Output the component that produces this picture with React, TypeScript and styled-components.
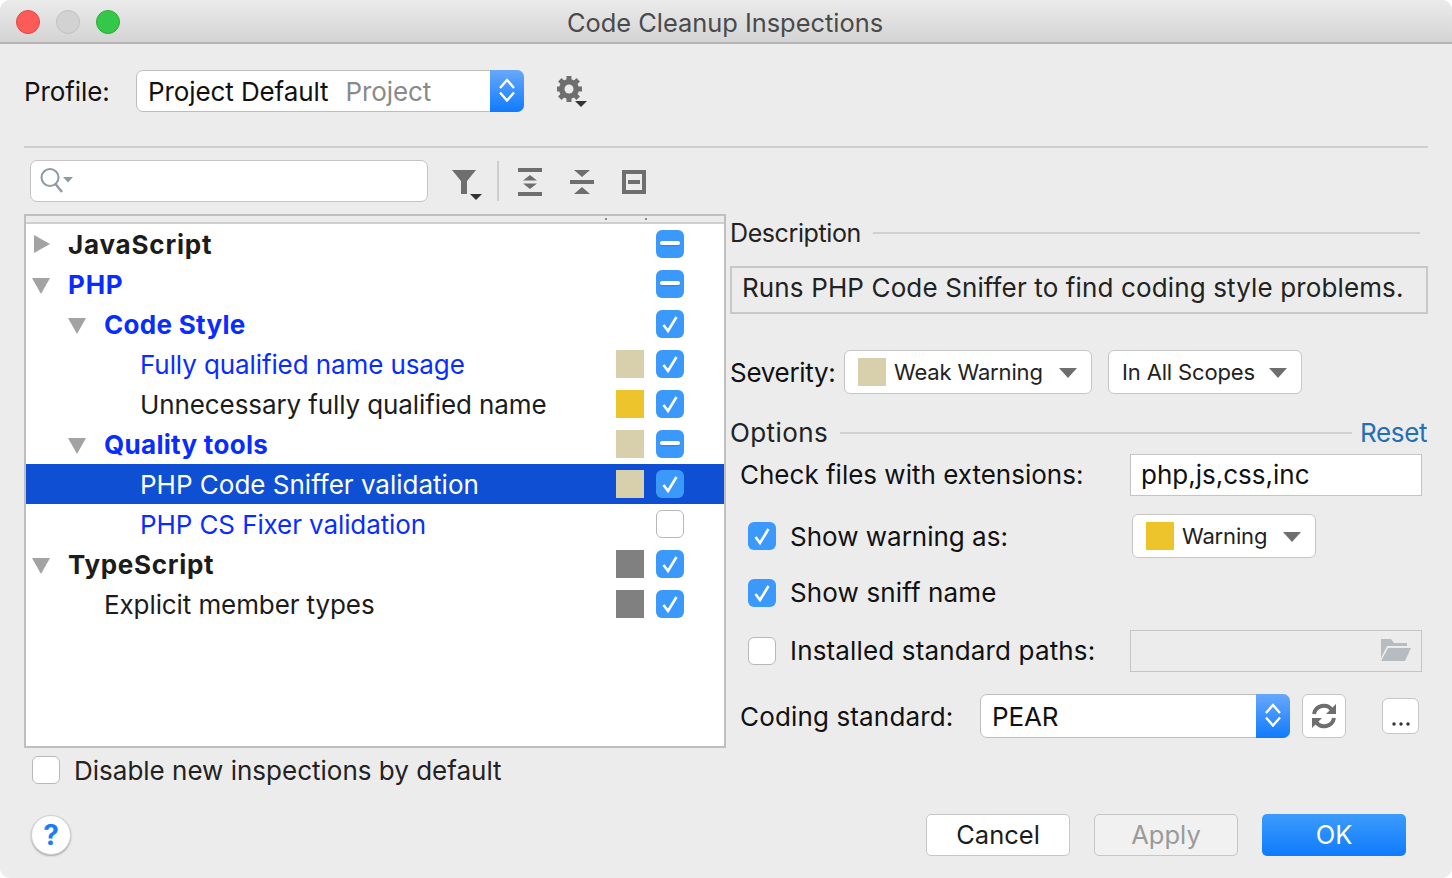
import React from 'react';
import styled, { createGlobalStyle } from 'styled-components';

const Global = createGlobalStyle`
  html, body { margin: 0; padding: 0; background: #fff; }
  body { font-family: Inter, "Liberation Sans", sans-serif; color: #1c1c1c; }
  * { box-sizing: border-box; }
`;

const Win = styled.div`
  width: 1452px; height: 878px; background: #ececec; border-radius: 10px; overflow: hidden;
  display: flex; flex-direction: column; font-size: 26px; line-height: 32px;
`;
const TitleBar = styled.div`
  height: 44px; flex: none; position: relative; display: flex; align-items: center; justify-content: center;
  background: linear-gradient(#ebebeb, #d4d4d4); border-bottom: 2px solid #b4b4b4;
  color: #4a4a4a; font-size: 25.4px; padding: 4px 2px 0 0;
`;
const Lights = styled.div`
  position: absolute; left: 16px; top: 10px; display: flex; gap: 16px;
`;
const Light = styled.span<{ $c: string; $b: string }>`
  width: 24px; height: 24px; border-radius: 50%; background: ${p => p.$c}; border: 1px solid ${p => p.$b};
`;
const Content = styled.div`
  flex: 1; display: flex; flex-direction: column; padding: 26px 24px 0;
`;
const ProfileRow = styled.div`
  display: flex; align-items: center; height: 42px;
`;
const ProfileLabel = styled.span`
  width: 112px; color: #111; font-size: 26px; padding-top: 2px; letter-spacing: -0.1px;
`;
const SelectBox = styled.div<{ $w: number; $h: number; $ml?: number }>`
  width: ${p => p.$w}px; height: ${p => p.$h}px; margin-left: ${p => p.$ml ?? 0}px; background: #fff; border: 1px solid #bdbdbd; border-radius: 7px;
  display: flex; align-items: center; padding: 2px 0 0 11px; position: relative; flex: none; color: #111; letter-spacing: -0.1px;
`;
const Stepper = styled.div<{ $w: number }>`
  position: absolute; right: -1px; top: -1px; bottom: -1px; width: ${p => p.$w}px; border-radius: 0 7px 7px 0;
  background: linear-gradient(#68a8fb, #0f7bfd); display: flex; align-items: center; justify-content: center; padding-bottom: 3px;
`;
const Muted = styled.span`
  color: #8a8a8a; margin-left: 17px;
`;
const GearWrap = styled.div`
  margin-left: 33px; width: 32px; height: 32px; flex: none; align-self: flex-end; margin-bottom: 4px;
`;
const Rule = styled.div`
  height: 2px; background: #cfcfcf; margin-top: 34px;
`;
const ToolRow = styled.div`
  display: flex; align-items: center; height: 42px; margin-top: 12px; padding-left: 6px;
`;
const Search = styled.div`
  width: 398px; height: 42px; background: #fff; border: 1px solid #c4c4c4; border-radius: 7px;
  display: flex; align-items: center; padding-left: 9px;
`;
const ToolIcon = styled.svg<{ $ml: number; $mt?: number }>`
  margin-left: ${p => p.$ml}px; margin-top: ${p => p.$mt ?? 2}px; flex: none; display: block;
`;
const ToolSep = styled.div`
  width: 2px; height: 40px; background: #cdcdcd; margin-left: 15px;
`;
const Main = styled.div`
  display: flex; margin-top: 12px;
`;
const LeftCol = styled.div`
  width: 702px; flex: none;
`;
const Tree = styled.div`
  height: 534px; background: #fff; border: 2px solid #bfbfbf; display: flex; flex-direction: column;
`;
const TreeHead = styled.div`
  height: 8px; flex: none; background: #ececec; border-bottom: 2px solid #cfcfcf; position: relative;
  &::before, &::after { content: ""; position: absolute; top: 2px; width: 2px; height: 2px; background: #8a8a8a; }
  &::before { left: 579px; }
  &::after { left: 619px; }
`;
const Row = styled.div<{ $level: number; $sel?: boolean }>`
  height: 40px; flex: none; display: flex; align-items: center;
  padding-left: ${p => 8 + p.$level * 36}px; padding-right: 40px;
  background: ${p => (p.$sel ? '#0e4fd4' : 'transparent')};
`;
const ArrowSlot = styled.span`
  width: 34px; flex: none; display: flex; align-items: center;
`;
const DownIcon = styled.svg`
  margin: 4px 0 0 -2px;
`;
const RowLabel = styled.span<{ $tone: 'dark' | 'blue' | 'white'; $ls: number; $bold?: boolean }>`
  color: ${p => (p.$tone === 'blue' ? '#0a2dff' : p.$tone === 'white' ? '#fff' : '#1c1c1c')};
  font-weight: ${p => (p.$bold ? 700 : 400)};
  letter-spacing: ${p => p.$ls}px;
  flex: 1; white-space: nowrap; padding-top: 2px;
`;
const Swatch = styled.span<{ $c: string }>`
  width: 28px; height: 28px; flex: none; background: ${p => p.$c}; margin-right: 12px;
`;
const SwatchGap = styled.span`
  width: 40px; flex: none;
`;
const BoxEmpty = styled.span`
  width: 28px; height: 28px; flex: none; background: #fff; border: 1px solid #b8b8b8; border-radius: 6px; display: block;
`;
const BoxOn = styled.span`
  width: 28px; height: 28px; flex: none; background: #3c99fc; border-radius: 6px; display: flex; align-items: center; justify-content: center;
`;
const DisableRow = styled.div`
  display: flex; align-items: center; gap: 14px; margin-top: 8px; padding-left: 8px; height: 28px; color: #222;
`;
const DisableText = styled.span`
  padding-top: 2px;
`;
const RightCol = styled.div`
  flex: 1; margin-left: 4px; display: flex; flex-direction: column; min-width: 0;
`;
const Section = styled.div<{ $mt: number }>`
  display: flex; align-items: center; margin-top: ${p => p.$mt}px; height: 30px; color: #222;
`;
const SectionTitle = styled.span<{ $fs: number; $ls: number; $pt: number }>`
  font-size: ${p => p.$fs}px; letter-spacing: ${p => p.$ls}px; padding-top: ${p => p.$pt}px;
`;
const SectionLine = styled.div`
  flex: 1; height: 2px; background: #d0d0d0; margin: 0 8px 0 12px;
`;
const Reset = styled.span`
  color: #2470b3; margin-right: 1px; letter-spacing: -0.4px;
`;
const DescBox = styled.div`
  height: 48px; margin-top: 18px; border: 2px solid #c8c8c8; display: flex; align-items: center; padding: 0 0 5px 10px; white-space: nowrap; color: #222; letter-spacing: 0.13px;
`;
const Line = styled.div<{ $mt: number; $pl?: number; $h: number }>`
  display: flex; align-items: center; margin-top: ${p => p.$mt}px; padding-left: ${p => p.$pl ?? 0}px; height: ${p => p.$h}px; color: #111; white-space: nowrap;
`;
const Label = styled.span<{ $w: number; $ls?: number; $pt?: number }>`
  width: ${p => p.$w}px; flex: none; padding-top: ${p => p.$pt ?? 2}px; letter-spacing: ${p => p.$ls ?? 0}px;
`;
const Drop = styled.div<{ $w: number; $ml: number }>`
  width: ${p => p.$w}px; margin-left: ${p => p.$ml}px; height: 44px; background: #fff; border: 1px solid #c6c6c6; border-radius: 6px;
  display: flex; align-items: center; padding-left: 13px; font-size: 22px; color: #222; flex: none; position: relative;
`;
const DropSwatch = styled.span<{ $c: string }>`
  width: 28px; height: 28px; background: ${p => p.$c}; margin-right: 8px; flex: none;
`;
const DropText = styled.span`
  letter-spacing: -0.15px;
`;
const Caret = styled.svg`
  position: absolute; right: 14px; top: 50%; margin-top: -4px;
`;
const TextField = styled.div<{ $disabled?: boolean }>`
  width: 292px; height: 42px; flex: none;
  background: ${p => (p.$disabled ? 'transparent' : '#fff')}; border: 1px solid #c4c4c4;
  display: flex; align-items: center; justify-content: ${p => (p.$disabled ? 'flex-end' : 'flex-start')}; padding: 0 10px; color: #111;
`;
const CheckSpacer = styled.span`
  width: 14px; flex: none;
`;
const IconBtn = styled.div<{ $ml: number; $w: number; $h: number }>`
  margin-left: ${p => p.$ml}px; width: ${p => p.$w}px; height: ${p => p.$h}px; flex: none; background: #fff; border: 1px solid #c6c6c6; border-radius: 6px;
  display: flex; align-items: center; justify-content: center;
`;
const Footer = styled.div`
  display: flex; align-items: center; padding: 0 22px 0 7px; margin-top: auto; height: 42px; margin-bottom: 22px;
`;
const Help = styled.div`
  width: 40px; height: 40px; border-radius: 50%; background: #fff; border: 1px solid #d0d0d0; box-shadow: 0 1px 2px rgba(0,0,0,.3);
  color: #1a7cf6; font-weight: 700; font-size: 28px; display: flex; align-items: center; justify-content: center;
`;
const Btn = styled.div<{ $kind?: 'primary' | 'disabled'; $auto?: boolean }>`
  width: 144px; height: 42px; border-radius: 5px; margin-left: ${p => (p.$auto ? 'auto' : '24px')};
  display: flex; align-items: center; justify-content: center; font-size: 25.5px;
  background: ${p => (p.$kind === 'primary' ? 'linear-gradient(#3c9bfb, #0f7bfd)' : p.$kind === 'disabled' ? '#f1f1f1' : '#fff')};
  color: ${p => (p.$kind === 'primary' ? '#fff' : p.$kind === 'disabled' ? '#9a9a9a' : '#1c1c1c')};
  border: ${p => (p.$kind === 'primary' ? 'none' : '1px solid #c6c6c6')};
`;

const Chevrons = () => (
  <svg width="16" height="24" viewBox="0 0 16 24" fill="none" stroke="#fff" strokeWidth="2.4">
    <path d="M1 10 L8 2 L15 10" />
    <path d="M1 14.500 L8 22.500 L15 14.500" />
  </svg>
);
const Check = () => (
  <svg width="20" height="20" viewBox="0 0 20 20" fill="none" stroke="#fff" strokeWidth="2.6">
    <path d="M3.500 11 L8 17 L16.500 3" />
  </svg>
);
const Dash = () => (
  <svg width="20" height="6" viewBox="0 0 20 6"><rect x="0" y="0" width="20" height="4" rx="2" fill="#fff" /><rect x="1" y="4" width="18" height="1.200" fill="#1f6fd0" opacity=".5" /></svg>
);
const Right = () => (
  <svg width="16" height="20" viewBox="0 0 16 20"><path d="M0 1 L16 10 L0 19Z" fill="#a3a3a3" /></svg>
);
const Down = () => (
  <DownIcon width="18" height="16" viewBox="0 0 18 16"><path d="M0 0 H18 L9 16Z" fill="#a3a3a3" /></DownIcon>
);
const Box = ({ s }: { s: 'c' | 'd' | 'e' }) =>
  s === 'e' ? <BoxEmpty /> : <BoxOn>{s === 'c' ? <Check /> : <Dash />}</BoxOn>;

type R = { t: string; l: number; a?: 'r' | 'd'; b?: boolean; tone: 'dark' | 'blue' | 'white'; ls: number; sw?: string; s: 'c' | 'd' | 'e'; sel?: boolean };
const rows: R[] = [
  { t: 'JavaScript', l: 0, a: 'r', b: true, tone: 'dark', ls: 0.8, s: 'd' },
  { t: 'PHP', l: 0, a: 'd', b: true, tone: 'blue', ls: 0.8, s: 'd' },
  { t: 'Code Style', l: 1, a: 'd', b: true, tone: 'blue', ls: 0.3, s: 'c' },
  { t: 'Fully qualified name usage', l: 2, tone: 'blue', ls: -0.1, sw: '#d8d0ad', s: 'c' },
  { t: 'Unnecessary fully qualified name', l: 2, tone: 'dark', ls: -0.1, sw: '#eec42c', s: 'c' },
  { t: 'Quality tools', l: 1, a: 'd', b: true, tone: 'blue', ls: 0.3, sw: '#d8d0ad', s: 'd' },
  { t: 'PHP Code Sniffer validation', l: 2, tone: 'white', ls: 0, sw: '#d8d0ad', s: 'c', sel: true },
  { t: 'PHP CS Fixer validation', l: 2, tone: 'blue', ls: -0.1, s: 'e' },
  { t: 'TypeScript', l: 0, a: 'd', b: true, tone: 'dark', ls: 0.7, sw: '#808080', s: 'c' },
  { t: 'Explicit member types', l: 1, tone: 'dark', ls: -0.1, sw: '#808080', s: 'c' },
];

const SmallCaret = () => (
  <Caret width="18" height="10" viewBox="0 0 18 10"><path d="M0 0 H18 L9 10Z" fill="#6e6e6e" /></Caret>
);

const Gear = () => (
  <svg width="32" height="32" viewBox="0 0 32 32">
    <g fill="#6e6e6e">
      {[0, 45, 90, 135].map(a => (
        <rect key={a} x="9.500" y="0" width="5" height="26" transform={`rotate(${a} 12 13)`} />
      ))}
    </g>
    <circle cx="12" cy="13" r="7.500" fill="none" stroke="#6e6e6e" strokeWidth="5" />
    <circle cx="12" cy="13" r="4.500" fill="#ececec" />
    <path fill="#333" d="M18 25 H30 L24 31Z" />
  </svg>
);

export default function App() {
  return (
    <Win>
      <Global />
      <TitleBar>
        <Lights>
          <Light $c="#fc5b57" $b="#e2463f" />
          <Light $c="#d2d2d2" $b="#c0c0c0" />
          <Light $c="#34c84a" $b="#2dac2f" />
        </Lights>
        Code Cleanup Inspections
      </TitleBar>
      <Content>
        <ProfileRow>
          <ProfileLabel>Profile:</ProfileLabel>
          <SelectBox $w={388} $h={42}>
            Project Default<Muted>Project</Muted>
            <Stepper $w={34}><Chevrons /></Stepper>
          </SelectBox>
          <GearWrap><Gear /></GearWrap>
        </ProfileRow>
        <Rule />
        <ToolRow>
          <Search>
            <svg width="36" height="28" viewBox="0 0 36 28" fill="none">
              <circle cx="10" cy="10.500" r="8.500" stroke="#8d9aa3" strokeWidth="2" />
              <path d="M15.500 17 L22 25" stroke="#8d9aa3" strokeWidth="2.400" />
              <path d="M23 10 H33 L28 15.500Z" fill="#8d9aa3" />
            </svg>
          </Search>
          <ToolIcon $ml={24} $mt={8} width="30" height="30" viewBox="0 0 30 30">
            <path fill="#6e6e6e" d="M0 0 H24 L15 11 V24 H9 V11Z" />
            <path fill="#333" d="M18 24 H30 L24 30Z" />
          </ToolIcon>
          <ToolSep />
          <ToolIcon $ml={19} width="24" height="28" viewBox="0 0 24 28" fill="#6e6e6e">
            <rect width="24" height="4" /><rect y="24" width="24" height="4" />
            <path d="M12 7 L19 12.500 H5Z M5 15.500 H19 L12 21Z" />
          </ToolIcon>
          <ToolIcon $ml={28} width="24" height="24" viewBox="0 0 24 24" fill="#6e6e6e">
            <rect y="10" width="24" height="4" />
            <path d="M4 0 H20 L12 7Z M12 17 L20 24 H4Z" />
          </ToolIcon>
          <ToolIcon $ml={28} width="24" height="24" viewBox="0 0 24 24">
            <path fill="#6e6e6e" fillRule="evenodd" d="M0 0 H24 V24 H0Z M4 4 V20 H20 V4Z" />
            <rect x="6" y="10" width="12" height="4" fill="#6e6e6e" />
          </ToolIcon>
        </ToolRow>
        <Main>
          <LeftCol>
            <Tree>
              <TreeHead />
              {rows.map(r => (
                <Row key={r.t} $level={r.l} $sel={r.sel}>
                  <ArrowSlot>{r.a === 'r' ? <Right /> : r.a === 'd' ? <Down /> : null}</ArrowSlot>
                  <RowLabel $tone={r.tone} $ls={r.ls} $bold={r.b}>{r.t}</RowLabel>
                  {r.sw ? <Swatch $c={r.sw} /> : <SwatchGap />}
                  <Box s={r.s} />
                </Row>
              ))}
            </Tree>
            <DisableRow><BoxEmpty /><DisableText>Disable new inspections by default</DisableText></DisableRow>
          </LeftCol>
          <RightCol>
            <Section $mt={4}><SectionTitle $fs={25} $ls={-0.4} $pt={0}>Description</SectionTitle><SectionLine /></Section>
            <DescBox>Runs PHP Code Sniffer to find coding style problems.</DescBox>
            <Line $mt={36} $h={44}>
              <Label $w={114} $ls={-0.3}>Severity:</Label>
              <Drop $w={248} $ml={0}><DropSwatch $c="#d8d0ad" /><DropText>Weak Warning</DropText><SmallCaret /></Drop>
              <Drop $w={194} $ml={16}><DropText>In All Scopes</DropText><SmallCaret /></Drop>
            </Line>
            <Section $mt={24}><SectionTitle $fs={26} $ls={0.4} $pt={0}>Options</SectionTitle><SectionLine /><Reset>Reset</Reset></Section>
            <Line $mt={6} $pl={10} $h={42}>
              <Label $w={390} $pt={0}>Check files with extensions:</Label>
              <TextField>php,js,css,inc</TextField>
            </Line>
            <Line $mt={18} $pl={18} $h={44}>
              <BoxOn><Check /></BoxOn>
              <CheckSpacer />
              <Label $w={342}>Show warning as:</Label>
              <Drop $w={184} $ml={0}><DropSwatch $c="#eec42c" /><DropText>Warning</DropText><SmallCaret /></Drop>
            </Line>
            <Line $mt={14} $pl={18} $h={42}>
              <BoxOn><Check /></BoxOn>
              <CheckSpacer />
              <Label $w={300} $ls={0.13} $pt={0}>Show sniff name</Label>
            </Line>
            <Line $mt={16} $pl={18} $h={42}>
              <BoxEmpty />
              <CheckSpacer />
              <Label $w={340} $ls={0.15} $pt={0}>Installed standard paths:</Label>
              <TextField $disabled>
                <svg width="30" height="24" viewBox="0 0 30 24" fill="#b7bcc0">
                  <path d="M0 0 H10 L13 4 H26 V7 H6 L0 19Z" />
                  <path d="M7 9 H30 L24 22 H0Z" />
                </svg>
              </TextField>
            </Line>
            <Line $mt={22} $pl={10} $h={44}>
              <Label $w={240} $ls={0.15}>Coding standard:</Label>
              <SelectBox $w={310} $h={44}>
                PEAR
                <Stepper $w={34}><Chevrons /></Stepper>
              </SelectBox>
              <IconBtn $ml={12} $w={44} $h={44}>
                <svg width="26" height="26" viewBox="0 0 26 26" fill="none" stroke="#6e6e6e" strokeWidth="4">
                  <path d="M3 11 A10 10 0 0 1 21 7" />
                  <path d="M23 15 A10 10 0 0 1 5 19" />
                  <path d="M25 1 V11 H15Z" fill="#6e6e6e" stroke="none" />
                  <path d="M1 25 V15 H11Z" fill="#6e6e6e" stroke="none" />
                </svg>
              </IconBtn>
              <IconBtn $ml={36} $w={37} $h={36}>
                <svg width="20" height="24" viewBox="0 0 20 24" fill="#333"><circle cx="3" cy="20" r="1.700" /><circle cx="10" cy="20" r="1.700" /><circle cx="17" cy="20" r="1.700" /></svg>
              </IconBtn>
            </Line>
          </RightCol>
        </Main>
        <Footer>
          <Help>?</Help>
          <Btn $auto>Cancel</Btn>
          <Btn $kind="disabled">Apply</Btn>
          <Btn $kind="primary">OK</Btn>
        </Footer>
      </Content>
    </Win>
  );
}
